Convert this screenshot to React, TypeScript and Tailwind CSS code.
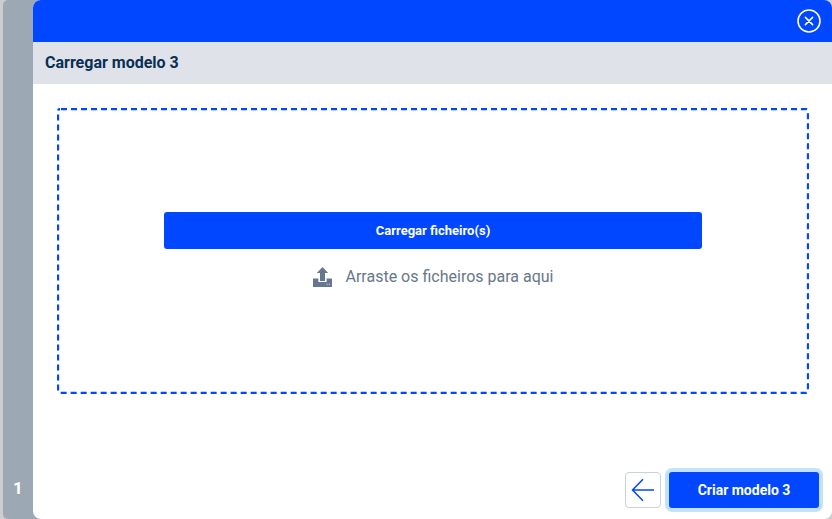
import React from "react";

const UploadIcon = () => (
  <svg width="19" height="20" viewBox="0 0 19 20" className="shrink-0 text-[#66788f]">
    <path d="M9.5 0 L15.2 6 H12 V14 H7 V6 H3.8 Z" fill="currentColor" />
    <path d="M0 11.5 H5.4 V15 H13.6 V11.5 H19 V20 H0 Z" fill="currentColor" />
    <rect x="13.5" y="16.8" width="1.2" height="1.2" fill="#b8c3d0" />
    <rect x="15.8" y="16.8" width="1.2" height="1.2" fill="#b8c3d0" />
  </svg>
);

const CloseIcon = () => (
  <svg width="24" height="24" viewBox="0 0 24 24" fill="none" stroke="white">
    <circle cx="12" cy="12" r="11" strokeWidth="1.6" />
    <path d="M8.4 8.4 L15.6 15.6 M15.6 8.4 L8.4 15.6" strokeWidth="1.6" strokeLinecap="round" />
  </svg>
);

const BackIcon = () => (
  <svg width="24" height="24" viewBox="0 0 24 24" fill="none" stroke="#0047ff" strokeWidth="1.5">
    <path d="M23 12 H1.5 M12 1.2 L1.5 12 L12 22.8" />
  </svg>
);

export default function App() {
  return (
    <div className="flex h-[519px] w-[832px] overflow-hidden bg-[#cdcdcd] pl-[3px] font-['Roboto',sans-serif]">
      <div className="-mr-[8px] flex w-[38px] shrink-0 items-end justify-center rounded-l-[5px] bg-[#9ca8b4] pr-[8px] pb-[21px]">
        <span className="text-[17px] leading-[20px] font-bold text-white">1</span>
      </div>

      <div className="relative flex min-w-0 flex-1 flex-col overflow-hidden rounded-[8px] bg-white">
        <div className="flex h-[42px] shrink-0 items-center justify-end bg-[#0047ff] pr-[11px] pb-[1px]">
          <CloseIcon />
        </div>

        <div className="flex h-[42px] shrink-0 items-center bg-[#dfe3e9] px-[12px]">
          <h1 className="text-[16px] font-bold text-[#0a2f52]">Carregar modelo 3</h1>
        </div>

        <div className="flex-1 px-[24px] pt-[24px]">
          <div className="relative flex h-[286px] w-[752px] flex-col items-center justify-center pb-[4px]">
            <svg className="absolute inset-0" width="752" height="286" fill="none">
              <rect
                x="1"
                y="1"
                width="750"
                height="284"
                rx="2"
                stroke="#0047ff"
                strokeWidth="2.3"
                strokeDasharray="6 4"
                strokeDashoffset="-1"
              />
            </svg>
            <button className="relative h-[37px] w-[538px] rounded-[3px] bg-[#0047ff] pt-[1px] text-[13px] font-bold text-white">
              Carregar ficheiro(s)
            </button>
            <div className="relative mt-[18px] flex items-center gap-[14px]">
              <UploadIcon />
              <span className="text-[16px] leading-[19px] text-[#66788a]">Arraste os ficheiros para aqui</span>
            </div>
          </div>
        </div>

        <div className="flex shrink-0 items-center justify-end gap-[4px] pr-[9px] pb-[7px]">
          <button className="flex h-[36px] w-[36px] items-center justify-center rounded-[4px] border border-[#c9d1da] bg-white">
            <BackIcon />
          </button>
          <button className="h-[44px] w-[158px] rounded-[7px] border-[4px] border-[#c5e2fd] bg-[#0047ff] text-[14px] font-bold text-white">
            Criar modelo 3
          </button>
        </div>
      </div>
    </div>
  );
}
